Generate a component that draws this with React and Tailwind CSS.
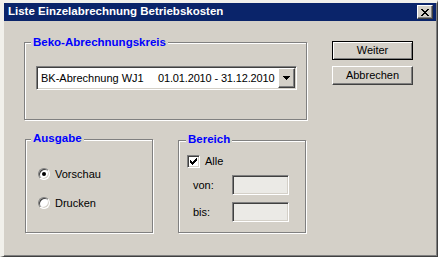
import React from 'react';

// classic win32 dialog: "Liste Einzelabrechnung Betriebskosten"
const sunken = 'border border-t-[#808080] border-l-[#808080] border-r-white border-b-white shadow-[inset_1px_1px_0_#404040,inset_-1px_-1px_0_#d4d0c8]';
const raised = 'border border-t-white border-l-white border-r-[#404040] border-b-[#404040] shadow-[inset_-1px_-1px_0_#808080]';

function Group({ title, legendClass, className, children }) {
  return (
    <div className={`relative border border-[#808080] shadow-[inset_1px_1px_0_#fff,1px_1px_0_#fff] ${className}`}>
      <span className={`absolute px-[2px] bg-[#d4d0c8] text-[11.5px] leading-[13px] font-bold text-[#0000ff] ${legendClass}`}>
        {title}
      </span>
      {children}
    </div>
  );
}

function Radio({ checked, label }) {
  return (
    <div className="flex items-center h-[14px] gap-[5px]">
      <div className={`w-[12px] h-[12px] rounded-full bg-white flex items-center justify-center ${sunken}`}>
        {checked && <div className="w-[4px] h-[4px] rounded-full bg-black" />}
      </div>
      <span>{label}</span>
    </div>
  );
}

export default function App() {
  return (
    <div className="w-[438px] h-[257px] flex flex-col bg-[#d4d0c8] border-l-4 border-t-[3px] border-r border-b border-l-[#f1f0eb] border-t-[#f1f0eb] border-r-[#404040] border-b-[#404040] shadow-[inset_-1px_-1px_0_#808080] font-['Liberation_Sans',Arial,sans-serif] text-[11px] text-black">
      {/* title bar */}
      <div className="h-[18px] mr-px bg-[#0a246a] flex items-center justify-between pl-[4px] pr-[3px]">
        <span className="text-white font-bold text-[11.5px] leading-none">Liste Einzelabrechnung Betriebskosten</span>
        <div className={`w-[16px] h-[14px] bg-[#d4d0c8] flex items-center justify-center ${raised}`}>
          <svg width="8" height="7" viewBox="0 0 8 7" shapeRendering="crispEdges">
            <path fill="#000" d="M0 0h2v1H0z M6 0h2v1H6z M1 1h2v1H1z M5 1h2v1H5z M2 2h4v1H2z M3 3h2v1H3z M2 4h4v1H2z M1 5h2v1H1z M5 5h2v1H5z M0 6h2v1H0z M6 6h2v1H6z" />
          </svg>
        </div>
      </div>

      <div className="flex items-start pl-[20px]">
        {/* left column */}
        <div className="flex flex-col pt-[21px]">
          <Group title="Beko-Abrechnungskreis" legendClass="top-[-7px] left-[6px]" className="w-[283px] h-[78px] pl-[11px] pt-[23px]">
            <div className={`w-[261px] h-[24px] bg-white flex items-center pl-[4px] ${sunken}`}>
              <span className="w-[117px] shrink-0 whitespace-nowrap">BK-Abrechnung WJ1</span>
              <span className="flex-1 whitespace-nowrap tracking-[-0.15px]">01.01.2010 - 31.12.2010</span>
              <div className={`w-[17px] h-[20px] mr-px bg-[#d4d0c8] flex items-center justify-center ${raised}`}>
                <svg width="7" height="4" viewBox="0 0 7 4" shapeRendering="crispEdges">
                  <path fill="#000" d="M0 0h7v1H0z M1 1h5v1H1z M2 2h3v1H2z M3 3h1v1H3z" />
                </svg>
              </div>
            </div>
          </Group>

          <div className="flex items-start mt-[19px]">
            <Group title="Ausgabe" legendClass="top-[-8px] left-[5px]" className="ml-px w-[128px] h-[94px] pl-[12px] pt-[27px] flex flex-col gap-[15px]">
              <Radio checked label="Vorschau" />
              <Radio label="Drucken" />
            </Group>

            <Group title="Bereich" legendClass="top-[-8px] left-[7px]" className="ml-[25px] mt-px w-[128px] h-[93px] pl-[8px] pt-[14px] flex flex-col">
              <div className="flex items-center gap-[5px] h-[13px]">
                <div className={`w-[13px] h-[13px] bg-white ${sunken}`}>
                  <svg width="11" height="11" viewBox="-1 -1 11 11" shapeRendering="crispEdges">
                    <path fill="#000" d="M1 3h1v3H1z M2 4h1v3H2z M3 5h1v3H3z M4 4h1v3H4z M5 3h1v3H5z M6 2h1v3H6z M7 1h1v3H7z" />
                  </svg>
                </div>
                <span>Alle</span>
              </div>
              <div className="flex items-center mt-[7px] pl-[6px]">
                <span className="w-[39px]">von:</span>
                <div className={`w-[57px] h-[20px] bg-[#ebeae6] ${sunken}`} />
              </div>
              <div className="flex items-center mt-[7px] pl-[6px]">
                <span className="w-[39px]">bis:</span>
                <div className={`w-[57px] h-[20px] bg-[#ebeae6] ${sunken}`} />
              </div>
            </Group>
          </div>
        </div>

        {/* right column */}
        <div className="flex flex-col pt-[20px] ml-[25px]">
          <button className="w-[81px] h-[19px] border border-black shadow-[inset_1px_1px_0_#fff,inset_-1px_-1px_0_#808080] flex items-center justify-center leading-none">
            Weiter
          </button>
          <button className={`mt-[6px] w-[81px] h-[19px] flex items-center justify-center leading-none ${raised}`}>
            Abbrechen
          </button>
        </div>
      </div>
    </div>
  );
}
